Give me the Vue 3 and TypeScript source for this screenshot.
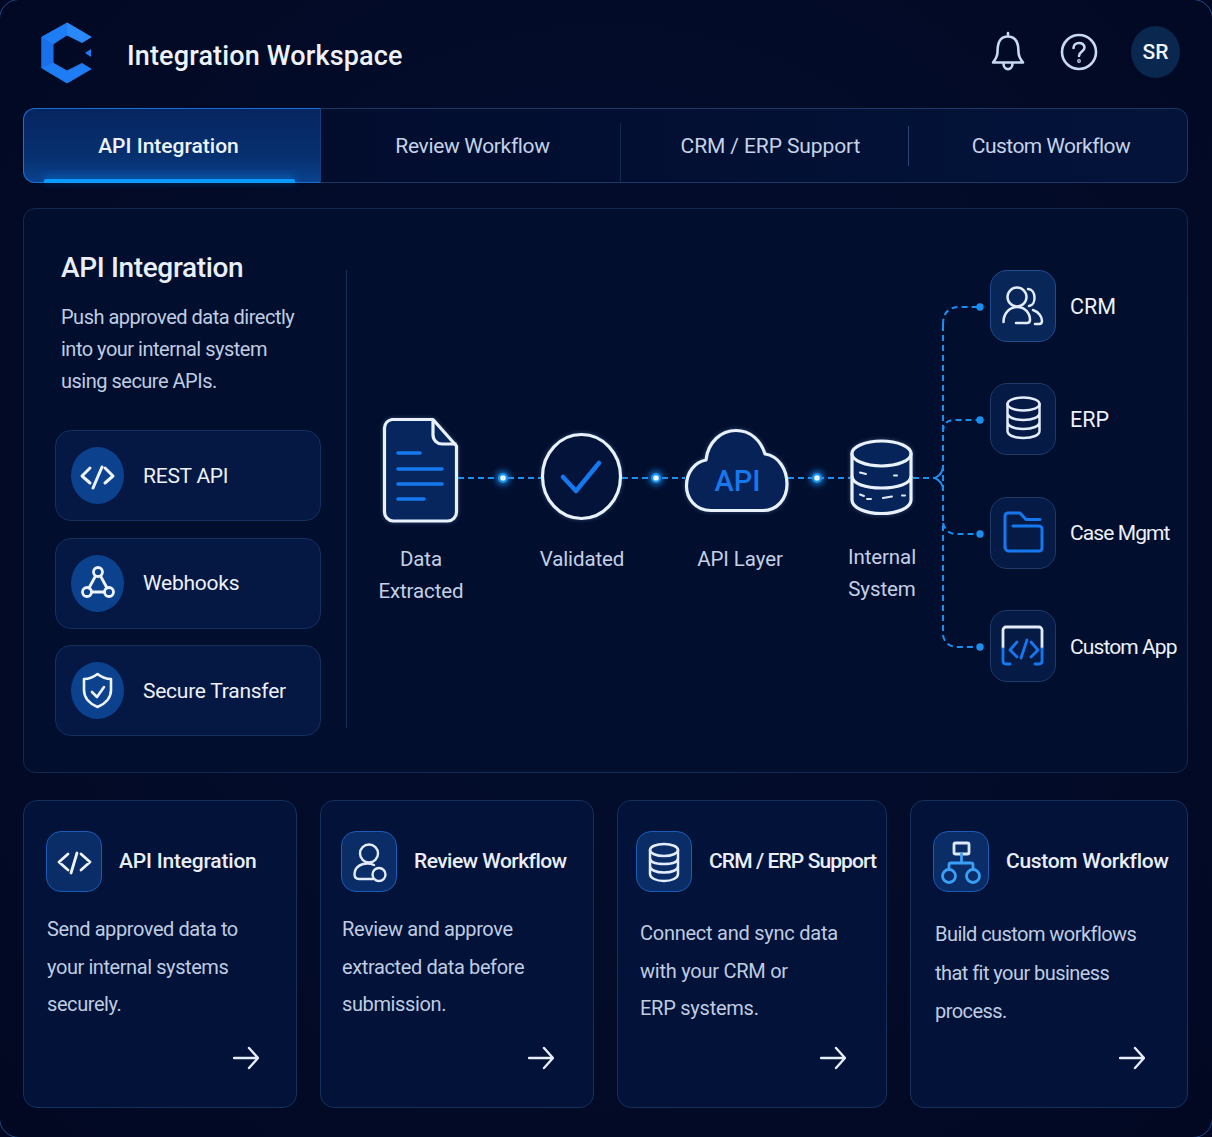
<script setup lang="ts">
const tabs: { label: string; cls: string }[] = [
  { label: 'API Integration', cls: 'tab-api' },
  { label: 'Review Workflow', cls: 'tab-review' },
  { label: 'CRM / ERP Support', cls: 'tab-crm' },
  { label: 'Custom Workflow', cls: 'tab-custom' },
]
const dots: number[] = [503, 656, 817]
</script>

<template>
  <div class="app">
    <header class="topbar">
      <svg class="logo" viewBox="41 22 52 62" width="52" height="62" aria-label="Logo">
        <path fill="#1e7df4" stroke="#1e7df4" stroke-width="1" stroke-linejoin="round" d="M67 23 91 37 82 42.500 67 35 53 44V63L67 71 82 63.500 91 69 67 83 42 68V37Z" />
        <path fill="#2a89fa" d="M67 22.500 91.500 37 82 42.500 67 35Z" />
        <path fill="#1a70ea" d="M41.500 37 53 44V63L41.500 68Z" />
        <path fill="#1e7df4" d="M85 53 91 49V57Z" />
      </svg>
      <h1 class="brand">Integration Workspace</h1>
      <div class="top-actions">
        <svg class="act-bell" viewBox="0 0 34 40" width="34" height="40" fill="none" stroke="#c9d9f2" stroke-width="2.600" stroke-linecap="round" stroke-linejoin="round">
          <path d="M17 2V5M6.500 21C6.500 10 10 5.500 17 5.500S27.500 10 27.500 21C27.500 26 30 29 32 31.500H2C4 29 6.500 26 6.500 21Z" />
          <path d="M12.500 32.500C12.500 40 21.500 40 21.500 32.500" />
        </svg>
        <svg class="act-help" viewBox="0 0 38 38" width="38" height="38" fill="none" stroke="#c9d9f2" stroke-width="2.600" stroke-linecap="round">
          <circle cx="19" cy="19" r="17" />
          <path d="M13.500 15C13.500 8.500 24.500 8.500 24.500 14.500C24.500 18.500 19 18.500 19 23" />
          <circle cx="19" cy="28" r=".6" />
        </svg>
        <div class="avatar">SR</div>
      </div>
    </header>

    <nav class="tabs">
      <div v-for="(tab, i) in tabs" :key="tab.label" class="tab" :class="[tab.cls, { active: i === 0 }]">{{ tab.label }}</div>
    </nav>

    <section class="panel">
      <aside class="intro">
        <h2>API Integration</h2>
        <p>Push approved data directly<br />into your internal system<br />using secure APIs.</p>
        <div class="methods">
          <div class="method">
            <span class="round">
              <svg viewBox="0 0 53 57" width="53" height="57" fill="none" stroke="#eef4ff" stroke-width="3" stroke-linecap="round" stroke-linejoin="round">
                <path d="M19 21 11 29 19 36M31 20 22 41M34 21 42 29 34 36" />
              </svg>
            </span>
            <span>REST API</span>
          </div>
          <div class="method">
            <span class="round">
              <svg viewBox="0 0 53 57" width="53" height="57" fill="none" stroke="#eef4ff" stroke-width="2.800" stroke-linecap="round">
                <circle cx="27" cy="17" r="4.500" /><circle cx="16" cy="37" r="4.500" /><circle cx="38" cy="37" r="4.500" />
                <path d="M24.500 21 18 33M29.500 21 36 33M21 37H33" />
              </svg>
            </span>
            <span>Webhooks</span>
          </div>
          <div class="method">
            <span class="round">
              <svg viewBox="0 0 53 57" width="53" height="57" fill="none" stroke="#eef4ff" stroke-width="2.600" stroke-linecap="round" stroke-linejoin="round">
                <path d="M26.500 12C31 15.500 35 17 40 17V28C40 36 34 42 26.500 45 19 42 13 36 13 28V17C18 17 22 15.500 26.500 12Z" />
                <path d="M21 30 26 35 33 25" />
              </svg>
            </span>
            <span>Secure Transfer</span>
          </div>
        </div>
      </aside>
      <div class="divider"></div>

      <div class="diagram">
        <svg class="wires" viewBox="347 208 841 565" width="841" height="565" fill="none">
          <defs>
            <filter id="soft" x="-100%" y="-100%" width="300%" height="300%"><feGaussianBlur stdDeviation="3" /></filter>
          </defs>
          <g stroke="#1b8ff0" stroke-width="2" stroke-dasharray="6 4">
            <path d="M458 478H541M622 478H685M788 478H850M913 478H935" />
            <path d="M943 325V635" />
            <path d="M943 325C943 312 949 307 960 307H980" />
            <path d="M943 432C943 424 947 420 954 420H980" />
            <path d="M943 523C945 530 949 534 956 534H980" />
            <path d="M943 635C944 642 949 647 958 647H980" />
          </g>
          <path d="M935 478C939 476 943 472 943 466M935 478C939 480 943 484 943 490" stroke="#1b8ff0" stroke-width="2" />
          <g v-for="x in dots" :key="x">
            <circle :cx="x" cy="478" r="7" fill="#1b8ff0" opacity=".8" filter="url(#soft)" />
            <circle :cx="x" cy="478" r="5" fill="#1b8ff0" />
            <circle :cx="x" cy="478" r="2.800" fill="#e6f6ff" />
          </g>
          <g fill="#1b8ff0">
            <circle cx="980" cy="307" r="3.700" /><circle cx="980" cy="420" r="3.700" /><circle cx="980" cy="534" r="3.700" /><circle cx="980" cy="647" r="3.700" />
          </g>

          <g class="node-glow" stroke="#e9f1ff" stroke-width="3.200" stroke-linejoin="round">
            <path fill="#08265e" d="M392 419.500H433L456.500 446V512A9 9 0 0 1 447.500 521H393A9 9 0 0 1 384.500 512V428A9 9 0 0 1 392 419.500Z" />
            <path d="M433 419.500V435A9 9 0 0 0 442 444H456.500" />
            <ellipse cx="581.500" cy="476.500" rx="39" ry="42" fill="#031339" />
            <path fill="#072256" d="M711 510.500C695 510.500 686.500 498 686.500 486 686.500 472 695 462 706 460 708 442 721 430.500 736 430.500 751 430.500 761 441 765 454 779 456 787 470 787 484 787 499 777 510.500 763 510.500Z" />
            <path fill="#07245a" d="M852 453V500C852 508 866 513.500 881.500 513.500S911 508 911 500V453" />
            <path d="M852 476C852 484 866 488 881.500 488S911 484 911 476" />
            <ellipse cx="881.500" cy="453.500" rx="29.500" ry="12.500" fill="#07245a" />
          </g>
          <path d="M398 453H420M398 469H442M398 484H442M398 499H424" stroke="#1678ee" stroke-width="3.600" stroke-linecap="round" />
          <path d="M563 477 576 491 599 463" stroke="#1678ee" stroke-width="4.500" stroke-linecap="round" stroke-linejoin="round" />
          <text class="cloud-text" x="737.500" y="491" text-anchor="middle">API</text>
          <path d="M860 472.500 866 474M894 475.500H897M860 494.500 864 496M867 499H871M883 498 892 496.500M902 495.500H905" stroke="#dfe9fb" stroke-width="2" stroke-linecap="round" />
        </svg>

        <div class="stages">
          <div class="stage">Data<br />Extracted</div>
          <div class="stage">Validated</div>
          <div class="stage">API Layer</div>
          <div class="stage stage-raised">Internal<br />System</div>
        </div>

        <div class="targets">
          <div class="target">
            <span class="square square-bright">
              <svg viewBox="0 0 66 72" width="66" height="72" fill="none" stroke="#e3ecfc" stroke-width="2.500" stroke-linecap="round" stroke-linejoin="round">
                <circle cx="27" cy="27" r="9.500" />
                <path d="M13.500 52C13.500 43 20 37 27 37 35 37 40 43 40 50Q40 53 37 53H26" />
                <path d="M38 19C46 19 47 35 39 36M43 40C49 42 52 47 52 51Q52 54 49 54H45" />
              </svg>
            </span>
            <span class="target-name">CRM</span>
          </div>
          <div class="target">
            <span class="square">
              <svg viewBox="0 0 66 72" width="66" height="72" fill="none" stroke="#e3ecfc" stroke-width="2.500" stroke-linecap="round" stroke-linejoin="round">
                <ellipse cx="33.500" cy="21" rx="16" ry="6.500" />
                <path d="M17.500 21V48C17.500 52 24 55 33.500 55S49.500 52 49.500 48V21M17.500 30C17.500 34 24 37 33.500 37S49.500 34 49.500 30M17.500 39C17.500 43 24 46 33.500 46S49.500 43 49.500 39" />
              </svg>
            </span>
            <span class="target-name">ERP</span>
          </div>
          <div class="target">
            <span class="square">
              <svg viewBox="0 0 66 72" width="66" height="72" fill="none" stroke="#1678ee" stroke-width="3" stroke-linecap="round" stroke-linejoin="round">
                <path d="M15 50V19A3 3 0 0 1 18 16H30L36 22.500H50" />
                <path d="M23 29H49A3 3 0 0 1 52 32V51A3 3 0 0 1 49 54H19A4 4 0 0 1 15 50" />
              </svg>
            </span>
            <span class="target-name tight">Case Mgmt</span>
          </div>
          <div class="target">
            <span class="square">
              <svg viewBox="0 0 66 72" width="66" height="72" fill="none" stroke="#1678ee" stroke-width="2.800" stroke-linecap="round" stroke-linejoin="round">
                <path stroke="#e3ecfc" d="M13 38V20A3 3 0 0 1 16 17H49A3 3 0 0 1 52 20V38" />
                <path d="M13 39V51Q13 54 16 54H20M45 54H49Q52 54 52 51V39" />
                <path d="M27 32 20 40 27 47M37 30 31 48M41 32 48 40 41 47" />
              </svg>
            </span>
            <span class="target-name tight">Custom App</span>
          </div>
        </div>
      </div>
    </section>

    <section class="cards">
      <article class="card card-api">
        <div class="card-head">
          <span class="tile">
            <svg viewBox="0 0 56 61" width="56" height="61" fill="none" stroke="#eef4ff" stroke-width="2.800" stroke-linecap="round" stroke-linejoin="round">
              <path d="M22 23 13 31 22 39M31 22 25 42M35 23 44 31 35 39" />
            </svg>
          </span>
          <h3>API Integration</h3>
        </div>
        <p>Send approved data to<br />your internal systems<br />securely.</p>
        <svg class="go" viewBox="0 0 26 24" width="26" height="24" fill="none" stroke="#e6eefc" stroke-width="2.400" stroke-linecap="round" stroke-linejoin="round"><path d="M1 12H25M16 2 25 12 16 22" /></svg>
      </article>
      <article class="card card-review">
        <div class="card-head">
          <span class="tile">
            <svg viewBox="0 0 56 61" width="56" height="61" fill="none" stroke="#e3ecfc" stroke-width="2.400" stroke-linecap="round" stroke-linejoin="round">
              <circle cx="28" cy="22.500" r="9" />
              <path d="M33 34C30 32.500 26 32 22 33 16 35 13.500 39 13.500 43 13.500 46 15 48 18 48H32" />
              <circle cx="38" cy="43.500" r="6.500" />
            </svg>
          </span>
          <h3>Review Workflow</h3>
        </div>
        <p>Review and approve<br />extracted data before<br />submission.</p>
        <svg class="go" viewBox="0 0 26 24" width="26" height="24" fill="none" stroke="#e6eefc" stroke-width="2.400" stroke-linecap="round" stroke-linejoin="round"><path d="M1 12H25M16 2 25 12 16 22" /></svg>
      </article>
      <article class="card card-crm">
        <div class="card-head">
          <span class="tile">
            <svg viewBox="0 0 56 61" width="56" height="61" fill="none" stroke="#e3ecfc" stroke-width="2.500" stroke-linecap="round" stroke-linejoin="round">
              <ellipse cx="28" cy="19" rx="14" ry="6" />
              <path d="M14 19V43C14 47 20 50 28 50S42 47 42 43V19M14 27C14 31 20 33 28 33S42 31 42 27M14 35C14 39 20 41.500 28 41.500S42 39 42 35" />
            </svg>
          </span>
          <h3>CRM / ERP Support</h3>
        </div>
        <p>Connect and sync data<br />with your CRM or<br />ERP systems.</p>
        <svg class="go" viewBox="0 0 26 24" width="26" height="24" fill="none" stroke="#e6eefc" stroke-width="2.400" stroke-linecap="round" stroke-linejoin="round"><path d="M1 12H25M16 2 25 12 16 22" /></svg>
      </article>
      <article class="card card-custom">
        <div class="card-head">
          <span class="tile">
            <svg viewBox="0 0 56 61" width="56" height="61" fill="none" stroke="#3aa0f5" stroke-width="2.800" stroke-linecap="round" stroke-linejoin="round">
              <rect x="21" y="12" width="15" height="11" rx="1.500" stroke="#dce8fb" />
              <path d="M28.500 23V32M16 38V34Q16 32 18 32H38Q40 32 40 34V38" />
              <circle cx="16" cy="45" r="6.500" /><circle cx="40" cy="45" r="6.500" />
            </svg>
          </span>
          <h3>Custom Workflow</h3>
        </div>
        <p>Build custom workflows<br />that fit your business<br />process.</p>
        <svg class="go" viewBox="0 0 26 24" width="26" height="24" fill="none" stroke="#e6eefc" stroke-width="2.400" stroke-linecap="round" stroke-linejoin="round"><path d="M1 12H25M16 2 25 12 16 22" /></svg>
      </article>
    </section>
  </div>
</template>

<style scoped>
.app {
  position: relative;
  box-sizing: border-box;
  width: 1212px;
  height: 1137px;
  overflow: hidden;
  padding: 0 24px 0 23px;
  background: radial-gradient(ellipse at 50% 45%, #030f30 0%, #020a26 70%, #020822 100%);
  font-family: Roboto, "Liberation Sans", sans-serif;
  color: #e8eefb;
}
.app::before {
  content: "";
  position: absolute;
  inset: -1px;
  border: 1px solid #234a86;
  border-radius: 20px;
  pointer-events: none;
}
.topbar {
  position: relative;
  display: flex;
  align-items: flex-start;
  height: 108px;
}
.logo {
  margin: 22px 0 0 18px;
  flex: none;
}
.brand {
  margin: 38px 0 0 34px;
  font-size: 27px;
  letter-spacing: .15px;
  line-height: 36px;
  font-weight: 500;
  color: #eef2fb;
}
.top-actions {
  display: flex;
  align-items: flex-start;
  margin-left: auto;
  margin-right: 8px;
  padding-top: 26px;
}
.act-bell {
  margin: 5px 0 0 0;
}
.act-help {
  margin: 7px 0 0 35px;
}
.avatar {
  display: flex;
  align-items: center;
  justify-content: center;
  width: 49px;
  height: 52px;
  margin-left: 33px;
  border-radius: 50%;
  background: #09274f;
  font-size: 21px;
  font-weight: 500;
  color: #f0f5fe;
}
.tabs {
  display: flex;
  box-sizing: border-box;
  height: 75px;
  border: 1px solid #1b3763;
  border-radius: 12px;
  background: linear-gradient(90deg, #020b2a 0%, #03133a 100%);
}
.tab {
  position: relative;
  box-sizing: border-box;
  display: flex;
  align-items: center;
  justify-content: center;
  font-size: 21px;
  letter-spacing: -.35px;
  color: #c5d2e8;
}
.tab-api { width: 298px; }
.tab-review { width: 299px; padding-left: 4px; }
.tab-crm { width: 288px; padding-left: 13px; letter-spacing: -.1px; }
.tab-custom { flex: 1; padding-left: 7px; letter-spacing: -.55px; }
.tab.active {
  margin: -1px 0 -1px -1px;
  height: 75px;
  padding-right: 7px;
  border: 1px solid #1a6fd4;
  border-right-color: #143f80;
  border-radius: 12px 0 0 12px;
  background: linear-gradient(180deg, #062560 0%, #07306f 65%, #0a428f 100%);
  font-weight: 500;
  letter-spacing: 0;
  color: #edf3fe;
}
.tab.active::after {
  content: "";
  position: absolute;
  left: 20px;
  bottom: -1px;
  width: 251px;
  height: 4px;
  border-radius: 2px 2px 0 0;
  background: #0a9bff;
  box-shadow: 0 -2px 8px rgba(10, 155, 255, .55);
}
.tab-crm::before {
  content: "";
  position: absolute;
  left: 0;
  top: 14px;
  bottom: 0;
  width: 1px;
  background: #13294f;
}
.tab-custom::before {
  content: "";
  position: absolute;
  left: 0;
  top: 17px;
  height: 40px;
  width: 1px;
  background: #2a4672;
}
.panel {
  display: flex;
  box-sizing: border-box;
  height: 565px;
  margin-top: 25px;
  border: 1px solid #14294f;
  border-radius: 12px;
  background: #020e2e;
}
.intro {
  box-sizing: border-box;
  width: 322px;
  padding: 41px 0 0 31px;
}
.intro h2 {
  margin: 0 0 0 6px;
  font-size: 28px;
  letter-spacing: -.35px;
  line-height: 36px;
  font-weight: 500;
  color: #e9eefa;
}
.intro p {
  margin: 15px 0 0 6px;
  font-size: 20px;
  letter-spacing: -.5px;
  line-height: 32px;
  color: #bfcce2;
}
.methods {
  display: flex;
  flex-direction: column;
  gap: 16.500px;
  margin-top: 33px;
}
.method {
  box-sizing: border-box;
  display: flex;
  align-items: center;
  gap: 19px;
  width: 266px;
  height: 91px;
  padding-left: 15px;
  border: 1px solid #14305f;
  border-radius: 16px;
  background: #041843;
  font-size: 21px;
  letter-spacing: -.25px;
  color: #ecf1fb;
}
.round {
  display: block;
  flex: none;
  width: 53px;
  height: 57px;
  border-radius: 50%;
  background: #0c418e;
}
.round svg, .square svg, .tile svg {
  display: block;
}
.divider {
  flex: none;
  align-self: flex-start;
  width: 1px;
  height: 458px;
  margin-top: 61px;
  background: #1a2f58;
}
.diagram {
  position: relative;
  display: flex;
  flex: 1;
}
.wires {
  position: absolute;
  left: 0;
  top: -1px;
}
.node-glow {
  filter: drop-shadow(0 0 2px rgba(150, 200, 255, .3));
}
.cloud-text {
  font-family: Roboto, "Liberation Sans", sans-serif;
  font-size: 29px;
  font-weight: 500;
  fill: #1678ee;
  stroke: none;
}
.stages {
  display: grid;
  grid-template-columns: 146px 176px 140px 144px;
  align-items: start;
  height: 100%;
  padding: 334px 0 0 1px;
  box-sizing: border-box;
}
.stage {
  position: relative;
  text-align: center;
  font-size: 20.500px;
  letter-spacing: -.1px;
  line-height: 32px;
  color: #c3d0e6;
}
.stage-raised {
  margin-top: -2px;
}
.targets {
  display: flex;
  flex-direction: column;
  gap: 42px;
  padding: 61px 0 0 36px;
}
.target {
  position: relative;
  display: flex;
  align-items: center;
  gap: 14px;
  height: 71.500px;
  font-size: 21.500px;
  color: #ecf1fb;
  white-space: nowrap;
}
.target-name {
  margin-top: 1px;
}
.tight {
  font-size: 21px;
  letter-spacing: -.9px;
}
.square {
  display: block;
  flex: none;
  box-sizing: border-box;
  width: 66px;
  height: 72px;
  border: 1px solid #1e3a69;
  border-radius: 17px;
  background: #051a45;
}
.square svg {
  margin: -1px;
}
.square-bright {
  border-color: #1f4c8e;
  background: #082758;
}
.cards {
  display: grid;
  grid-template-columns: 274px 274px 270px 278px;
  gap: 23px;
  margin-top: 27px;
  height: 308px;
}
.card {
  box-sizing: border-box;
  display: flex;
  flex-direction: column;
  padding-top: 30px;
  border: 1px solid #16305c;
  border-radius: 14px;
  background: #021238;
}
.card-api { padding-left: 22px; }
.card-review { padding-left: 20px; }
.card-crm { padding-left: 18px; }
.card-custom { padding-left: 22px; }
.card-head {
  display: flex;
  align-items: center;
  gap: 17px;
  height: 61px;
}
.card h3 {
  margin: 0 0 2px;
  font-size: 21px;
  font-weight: 500;
  color: #e9eefa;
  white-space: nowrap;
}
.card-api h3 { letter-spacing: -.2px; }
.card-review h3 { letter-spacing: -.55px; }
.card-crm h3 { letter-spacing: -.9px; }
.card-custom h3 { letter-spacing: -.3px; }
.tile {
  display: block;
  flex: none;
  box-sizing: border-box;
  width: 56px;
  height: 61px;
  border: 1px solid #1a5cb5;
  border-radius: 15px;
  background: #0a2d68;
}
.tile svg {
  margin: -1px;
}
.card p {
  margin: 19px 0 0 1px;
  font-size: 20px;
  letter-spacing: -.38px;
  line-height: 37.500px;
  color: #bfcce2;
}
.card-api p { letter-spacing: -.42px; }
.card-review p { letter-spacing: -.38px; }
.card-crm p {
  margin: 23px 0 0 4px;
  letter-spacing: -.25px;
}
.card-custom p {
  margin: 23px 0 0 2px;
  letter-spacing: -.55px;
  line-height: 38.500px;
}
.go {
  align-self: flex-end;
  margin-top: auto;
  margin-bottom: 37px;
  margin-right: 37px;
}
.card-review .go { margin-right: 39px; }
.card-crm .go { margin-right: 40px; }
.card-custom .go { margin-right: 42px; }
</style>

<style>
html, body { margin: 0; background: #020822; }
</style>
